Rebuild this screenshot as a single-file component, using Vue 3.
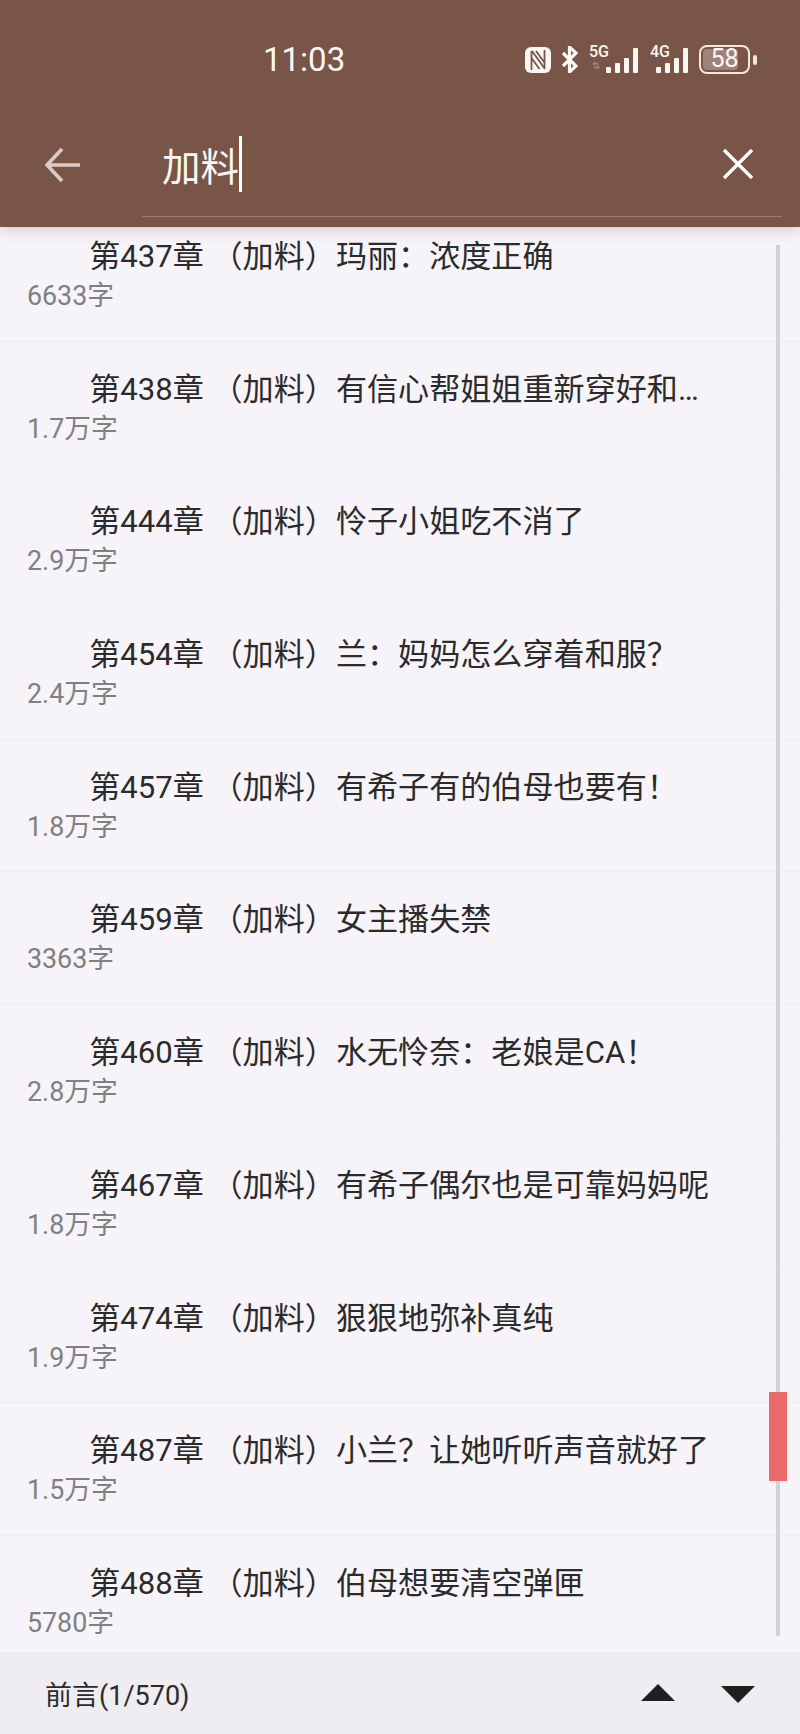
<script setup>
const chapters = [
  { title: '第437章 （加料）玛丽：浓度正确', size: '6633字' },
  { title: '第438章 （加料）有信心帮姐姐重新穿好和…', size: '1.7万字' },
  { title: '第444章 （加料）怜子小姐吃不消了', size: '2.9万字' },
  { title: '第454章 （加料）兰：妈妈怎么穿着和服？', size: '2.4万字' },
  { title: '第457章 （加料）有希子有的伯母也要有！', size: '1.8万字' },
  { title: '第459章 （加料）女主播失禁', size: '3363字' },
  { title: '第460章 （加料）水无怜奈：老娘是CA！', size: '2.8万字' },
  { title: '第467章 （加料）有希子偶尔也是可靠妈妈呢', size: '1.8万字' },
  { title: '第474章 （加料）狠狠地弥补真纯', size: '1.9万字' },
  { title: '第487章 （加料）小兰？让她听听声音就好了', size: '1.5万字' },
  { title: '第488章 （加料）伯母想要清空弹匣', size: '5780字' },
]
const signalBars = [0, 1, 2, 3]
</script>

<template>
  <div class="page">
    <header class="top">
      <div class="status">
        <span class="time">11:03</span>
        <div class="status-icons">
          <svg class="nfc" width="26" height="26" viewBox="0 0 26 26">
            <rect x="0" y="0" width="26" height="26" rx="6" fill="#fbf7f4" />
            <path d="M6.5 23V4M19.5 22V3M7 4l13 18M6.5 11l8 11M19 15l-8-11" fill="none" stroke="#795548" stroke-width="1.8" />
          </svg>
          <svg class="bt" width="17" height="27" viewBox="0 0 17 27">
            <path d="M2 7l13 13-6.5 6V1L15 7 2 20" fill="none" stroke="#fbf7f4" stroke-width="3.2" />
          </svg>
          <div class="net net-5g">
            <div class="net-label">
              <span>5G</span>
              <small>⇅</small>
            </div>
            <div class="bars">
              <i v-for="n in signalBars" :key="n" :class="'bar bar' + n"></i>
            </div>
          </div>
          <div class="net net-4g">
            <div class="net-label">
              <span>4G</span>
            </div>
            <div class="bars">
              <i v-for="n in signalBars" :key="n" :class="'bar bar' + n"></i>
            </div>
          </div>
          <div class="battery">
            <div class="battery-body">
              <div class="battery-fill"></div>
              <span>58</span>
            </div>
            <div class="battery-tip"></div>
          </div>
        </div>
      </div>
      <div class="search">
        <svg class="back" width="36" height="36" viewBox="0 0 36 36">
          <path d="M35 18H3M17 2L2 18l15 16" fill="none" stroke="#d9cbc6" stroke-width="3.6" />
        </svg>
        <div class="field">
          <span class="query">加料</span>
          <span class="caret"></span>
        </div>
        <svg class="close" width="32" height="32" viewBox="0 0 32 32">
          <path d="M2 2l28 28M30 2L2 30" fill="none" stroke="#fff" stroke-width="3.4" />
        </svg>
      </div>
    </header>

    <main class="list">
      <div class="rows">
        <div v-for="c in chapters" :key="c.title" class="row">
          <div class="title">{{ c.title }}</div>
          <div class="size">{{ c.size }}</div>
        </div>
      </div>
      <div class="track"></div>
      <div class="thumb"></div>
    </main>

    <footer class="bottom">
      <span class="progress">前言(1/570)</span>
      <div class="arrows">
        <span class="tri up"></span>
        <span class="tri down"></span>
      </div>
    </footer>
  </div>
</template>

<style scoped>
.page {
  width: 800px;
  height: 1734px;
  display: flex;
  flex-direction: column;
  overflow: hidden;
  background: #f6f4f8;
  font-family: Roboto, "Noto Sans CJK SC", sans-serif;
}
.top {
  position: relative;
  z-index: 2;
  height: 227px;
  flex: none;
  background: #795548;
  box-shadow: 0 3px 14px rgba(0, 0, 0, 0.16);
  color: #fff;
}
.status {
  display: flex;
  align-items: center;
  height: 45px;
  padding: 37px 0 0 263px;
}
.time {
  width: 262px;
  font-family: Roboto, sans-serif;
  font-size: 33px;
  line-height: 45px;
  color: #fbf7f4;
}
.status-icons {
  display: flex;
  align-items: center;
  height: 30px;
}
.nfc {
  margin-right: 10px;
}
.bt {
  margin-right: 11px;
}
.net {
  position: relative;
  display: flex;
  align-items: flex-end;
  height: 27px;
}
.net-label {
  position: absolute;
  left: 0;
  top: -2px;
  display: flex;
  flex-direction: column;
  font-family: Roboto, sans-serif;
  font-size: 16px;
  font-weight: 500;
  line-height: 16px;
  color: #fbf7f4;
}
.net-label small {
  width: 14px;
  font-size: 10px;
  line-height: 12px;
  color: #a88f85;
  text-align: center;
}
.net-5g {
  padding-left: 17px;
  margin-right: 12px;
}
.net-4g {
  padding-left: 6px;
  margin-right: 11px;
}
.bars {
  display: flex;
  align-items: flex-end;
  gap: 4px;
  height: 25px;
}
.bar {
  display: block;
  width: 5px;
  background: #fbf7f4;
  border-radius: 1px;
}
.bar0 { height: 6px; }
.bar1 { height: 10px; }
.bar2 { height: 15px; }
.bar3 { height: 25px; }
.battery {
  display: flex;
  align-items: center;
  gap: 3px;
}
.battery-body {
  position: relative;
  box-sizing: border-box;
  width: 51px;
  height: 29px;
  border: 2.5px solid #f1e8e3;
  border-radius: 8px;
  padding: 2px;
  text-align: center;
}
.battery-fill {
  width: 82%;
  height: 100%;
  border-radius: 4px;
  background: #a08279;
}
.battery-body span {
  position: absolute;
  inset: 0;
  font-family: Roboto, sans-serif;
  font-size: 25px;
  line-height: 24px;
  color: #fbf7f4;
}
.battery-tip {
  width: 4px;
  height: 10px;
  border-radius: 2px;
  background: #f1e8e3;
}
.search {
  display: flex;
  align-items: center;
  height: 90px;
  margin-top: 37px;
  padding: 0 46px 0 45px;
}
.back {
  flex: none;
  margin-top: 2px;
}
.field {
  display: flex;
  align-items: center;
  flex: 1;
  height: 60px;
  margin-left: 81px;
}
.query {
  font-family: "Noto Sans CJK SC", sans-serif;
  font-size: 38.5px;
  line-height: 60px;
  color: #fbf7f4;
}
.caret {
  width: 3px;
  height: 56px;
  background: #fff;
}
.close {
  flex: none;
}
.top::after {
  content: "";
  position: absolute;
  left: 142px;
  right: 18px;
  top: 216px;
  height: 1px;
  background: #9a7a70;
}
.list {
  position: relative;
  flex: 1;
  overflow: hidden;
}
.rows {
  margin-top: -18px;
}
.row {
  box-sizing: border-box;
  height: 132.7px;
  padding: 26px 70px 0 27px;
  border-bottom: 1px solid #f0eef2;
}
.title {
  font-size: 31.1px;
  line-height: 44px;
  color: #2b2b2b;
  text-indent: 2em;
  white-space: nowrap;
}
.size {
  font-size: 26.8px;
  line-height: 36px;
  margin-top: -1px;
  color: #808080;
}
.track {
  position: absolute;
  left: 776px;
  top: 18px;
  width: 4px;
  height: 1391px;
  background: #d2d1d4;
}
.thumb {
  position: absolute;
  left: 769px;
  top: 1165px;
  width: 18px;
  height: 89px;
  background: #ec6a6a;
}
.bottom {
  display: flex;
  align-items: center;
  justify-content: space-between;
  flex: none;
  height: 82px;
  padding: 0 45px 0 45px;
  background: #efedf1;
}
.progress {
  font-size: 27px;
  color: #2b2b2b;
}
.arrows {
  display: flex;
  align-items: center;
  gap: 46px;
}
.tri {
  width: 0;
  height: 0;
  border-left: 17px solid transparent;
  border-right: 17px solid transparent;
}
.up {
  border-bottom: 17px solid #1f1f1f;
  margin-bottom: 2px;
}
.down {
  border-top: 17px solid #1f1f1f;
  margin-top: 3px;
}
</style>
